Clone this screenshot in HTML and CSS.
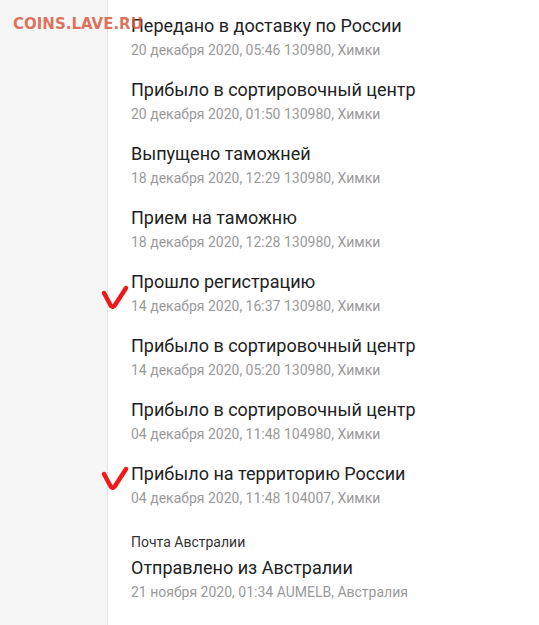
FILE: index.html
```html
<!DOCTYPE html>
<html lang="ru">
<head>
    <meta charset="UTF-8">
    <title>Отслеживание</title>
    <link rel="stylesheet" href="styles.css">
</head>
<body>
    <div class="page">
        <div class="sidebar"></div>
        <div class="track">
            <div class="event">
                <div class="title">Передано в доставку по России</div>
                <div class="date">20 декабря 2020, 05:46 130980, Химки</div>
            </div>
            <div class="event">
                <div class="title">Прибыло в сортировочный центр</div>
                <div class="date">20 декабря 2020, 01:50 130980, Химки</div>
            </div>
            <div class="event">
                <div class="title">Выпущено таможней</div>
                <div class="date">18 декабря 2020, 12:29 130980, Химки</div>
            </div>
            <div class="event">
                <div class="title">Прием на таможню</div>
                <div class="date">18 декабря 2020, 12:28 130980, Химки</div>
            </div>
            <div class="event">
                <div class="title">Прошло регистрацию</div>
                <div class="date">14 декабря 2020, 16:37 130980, Химки</div>
            </div>
            <div class="event">
                <div class="title">Прибыло в сортировочный центр</div>
                <div class="date">14 декабря 2020, 05:20 130980, Химки</div>
            </div>
            <div class="event">
                <div class="title">Прибыло в сортировочный центр</div>
                <div class="date">04 декабря 2020, 11:48 104980, Химки</div>
            </div>
            <div class="event">
                <div class="title">Прибыло на территорию России</div>
                <div class="date">04 декабря 2020, 11:48 104007, Химки</div>
            </div>
            <div class="carrier">Почта Австралии</div>
            <div class="event">
                <div class="title">Отправлено из Австралии</div>
                <div class="date">21 ноября 2020, 01:34 AUMELB, Австралия</div>
            </div>
            <div class="event">
                <div class="title">Принято</div>
            </div>
        </div>
    </div>

    <div class="watermark">COINS.LAVE.RU</div>

    <svg class="check check-1" width="30" height="28" viewBox="0 0 30 28">
        <path d="M4 9 L11 22 Q13 24 15 21 L26 4" />
    </svg>
    <svg class="check check-2" width="30" height="28" viewBox="0 0 30 28">
        <path d="M4 9 L11 22 Q13 24 15 21 L26 4" />
    </svg>
</body>
</html>
```

FILE: styles.css
```css
body {
    margin: 0;
    font-family: Roboto, "Liberation Sans", Arial, sans-serif;
    background-color: #fff;
    color: #222;
    overflow: hidden;
}

.page {
    display: flex;
    height: 625px;
    overflow: hidden;
}

.sidebar {
    width: 107px;
    flex-shrink: 0;
    background-color: #f6f6f6;
    border-right: 1px solid #e2e2e2;
}

.track {
    padding: 14px 0 0 23px;
}

.event {
    height: 64px;
}

.title {
    font-size: 18px;
    line-height: 24px;
    color: #222;
}

.date {
    font-size: 14px;
    line-height: 24px;
    color: #9a9a9a;
}

.carrier {
    font-size: 14px;
    line-height: 18px;
    color: #333;
    margin: 7px 0 5px;
}

.watermark {
    position: absolute;
    left: 13px;
    top: 15px;
    font-family: "DejaVu Sans", Verdana, sans-serif;
    font-weight: bold;
    font-size: 15px;
    color: rgba(214, 84, 58, 0.82);
}

.check {
    position: absolute;
    left: 100px;
}

.check path {
    fill: none;
    stroke: #f01818;
    stroke-width: 4.5;
    stroke-linecap: round;
    stroke-linejoin: round;
}

.check-1 {
    top: 284px;
}

.check-2 {
    top: 465px;
}
```
